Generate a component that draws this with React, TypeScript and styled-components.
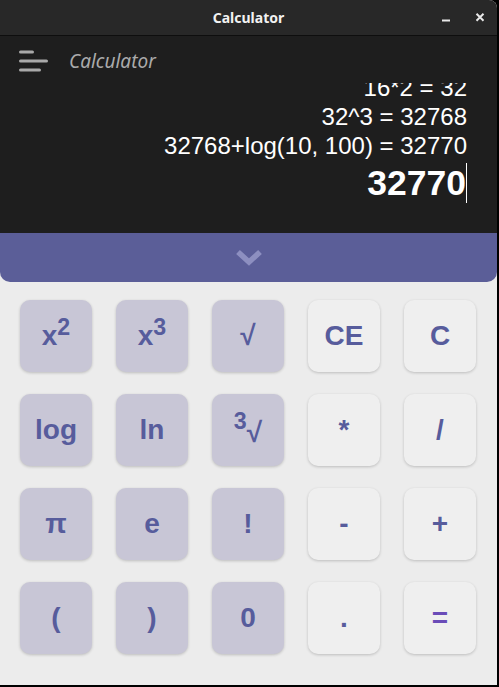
import React from "react";
import styled, { createGlobalStyle } from "styled-components";

const Global = createGlobalStyle`
  html, body { margin: 0; padding: 0; background: #000; }
  body { width: 499px; height: 687px; overflow: hidden; }
`;

const Window = styled.div`
  width: 497px;
  height: 685px;
  display: flex;
  flex-direction: column;
  background: #ececec;
  border-top-right-radius: 8px;
  overflow: hidden;
  font-family: "Liberation Sans", Arial, sans-serif;
`;

const TitleBar = styled.header`
  height: 35px;
  flex: none;
  display: grid;
  grid-template-columns: 1fr auto 1fr;
  align-items: center;
  background: #282828;
  border-bottom: 1px solid #0e0e0e;
`;

const WindowTitle = styled.div`
  grid-column: 2;
  font-family: "Noto Sans", sans-serif;
  font-weight: 700;
  font-size: 14px;
  color: #f2f2f2;
`;

const Controls = styled.div`
  grid-column: 3;
  justify-self: end;
  display: flex;
  align-items: center;
  gap: 18px;
  padding-right: 9px;
`;

const ControlIcon = styled.svg`
  width: 16px;
  height: 16px;
  display: block;
`;

const Dark = styled.div`
  background: #1e1e1e;
  display: flex;
  flex-direction: column;
  flex: none;
`;

const Header = styled.div`
  height: 47px;
  box-sizing: border-box;
  padding: 3px 0 0 19px;
  display: flex;
  align-items: center;
`;

const Hamburger = styled.svg`
  width: 29px;
  height: 22px;
  display: block;
`;

const AppTitle = styled.div`
  margin-left: 21px;
  font-family: "Noto Sans", sans-serif;
  font-style: italic;
  font-size: 19px;
  color: #ababab;
`;

const Display = styled.div`
  height: 150px;
  box-sizing: border-box;
  overflow: hidden;
  display: flex;
  flex-direction: column;
  justify-content: flex-end;
  align-items: flex-end;
  padding: 0 30px 30px 0;
  color: #ffffff;
`;

const HistoryLine = styled.div`
  font-size: 24px;
  line-height: 29px;
  white-space: nowrap;
`;

const Result = styled.div`
  margin-top: 3px;
  font-size: 35.5px;
  font-weight: 700;
  line-height: 40px;
  white-space: nowrap;
  border-right: 1px solid #ffffff;
`;

const Toggle = styled.div`
  height: 49px;
  flex: none;
  background: #5b5e98;
  border-radius: 0 0 10px 10px;
  display: flex;
  align-items: center;
  justify-content: center;
`;

const Keypad = styled.div`
  flex: 1;
  display: grid;
  grid-template-columns: repeat(5, 72px);
  grid-auto-rows: 72px;
  gap: 22px 24px;
  padding: 18px 20px;
  align-content: start;
`;

type Kind = "fn" | "op" | "eq";

const Key = styled.button<{ $kind: Kind }>`
  border: none;
  border-radius: 10px;
  padding: 0;
  display: flex;
  align-items: center;
  justify-content: center;
  background: ${(p) => (p.$kind === "fn" ? "#c8c6d6" : "#efefef")};
  color: ${(p) => (p.$kind === "eq" ? "#6a4cb8" : "#575c9c")};
  font-family: "Liberation Sans", Arial, sans-serif;
  font-weight: 700;
  font-size: 28px;
  line-height: 1;
  box-shadow: 0 1px 3px rgba(0, 0, 0, 0.2);
`;

const Label = styled.span`
  display: block;
  white-space: nowrap;
`;

const Sup = styled.span`
  font-size: 0.83em;
  vertical-align: 0.42em;
  line-height: 0;
`;

const Root = styled.span`
  display: inline-block;
  transform: translateY(3px);
`;

const keys: { label: React.ReactNode; kind: Kind }[] = [
  { label: <>x<Sup>2</Sup></>, kind: "fn" },
  { label: <>x<Sup>3</Sup></>, kind: "fn" },
  { label: "√", kind: "fn" },
  { label: "CE", kind: "op" },
  { label: "C", kind: "op" },
  { label: "log", kind: "fn" },
  { label: "ln", kind: "fn" },
  { label: <><Sup>3</Sup><Root>√</Root></>, kind: "fn" },
  { label: "*", kind: "op" },
  { label: "/", kind: "op" },
  { label: "π", kind: "fn" },
  { label: "e", kind: "fn" },
  { label: "!", kind: "fn" },
  { label: "-", kind: "op" },
  { label: "+", kind: "op" },
  { label: "(", kind: "fn" },
  { label: ")", kind: "fn" },
  { label: "0", kind: "fn" },
  { label: ".", kind: "op" },
  { label: "=", kind: "eq" },
];

export default function App() {
  return (
    <>
      <Global />
      <Window>
        <TitleBar>
          <WindowTitle>Calculator</WindowTitle>
          <Controls>
            <ControlIcon viewBox="0 0 16 16">
              <rect x="4" y="9.5" width="8" height="2" fill="#e8e8e8" />
            </ControlIcon>
            <ControlIcon viewBox="0 0 16 16">
              <path d="M4.5 3.7 L11.5 10.7 M11.5 3.7 L4.5 10.7" stroke="#e8e8e8" strokeWidth="2" fill="none" />
            </ControlIcon>
          </Controls>
        </TitleBar>
        <Dark>
          <Header>
            <Hamburger viewBox="0 0 29 22">
              <g stroke="#a9a9a9" strokeWidth="3" strokeLinecap="round">
                <line x1="1.5" y1="2" x2="13.5" y2="2" />
                <line x1="1.5" y1="11" x2="27.5" y2="11" />
                <line x1="1.5" y1="20" x2="20.5" y2="20" />
              </g>
            </Hamburger>
            <AppTitle>Calculator</AppTitle>
          </Header>
          <Display>
            <HistoryLine>16*2 = 32</HistoryLine>
            <HistoryLine>32^3 = 32768</HistoryLine>
            <HistoryLine>32768+log(10, 100) = 32770</HistoryLine>
            <Result>32770</Result>
          </Display>
        </Dark>
        <Toggle>
          <svg width="28" height="18" viewBox="0 0 28 18">
            <polyline points="3,3 14,13 25,3" fill="none" stroke="#8d8fc0" strokeWidth="5.5" />
          </svg>
        </Toggle>
        <Keypad>
          {keys.map((k, i) => (
            <Key key={i} $kind={k.kind}>
              <Label>{k.label}</Label>
            </Key>
          ))}
        </Keypad>
      </Window>
    </>
  );
}
